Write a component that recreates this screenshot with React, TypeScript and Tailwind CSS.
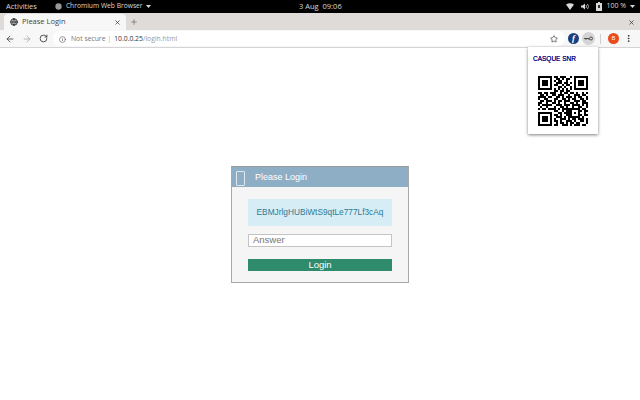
import React from 'react';
import { ArrowLeft, ArrowRight, RotateCw, Info, Star, X, Plus, Globe, MoreVertical } from 'lucide-react';

// 25x25 modules, 2px each
const QR_ROWS = [
  'XXXXXXX.XX.XXX..X.XXXXXXX',
  'X.....X..XX.X.XX..X.....X',
  'X.XXX.X.X.XX..X...X.XXX.X',
  'X.XXX.X..XXX.XX.X.X.XXX.X',
  'X.XXX.X.XX..X.XX..X.XXX.X',
  'X.....X...XX.X..X.X.....X',
  'XXXXXXX.X.X.X.X.X.XXXXXXX',
  '........XX.XX.XX.........',
  'XX.XX.XXX..X.XX.XX.X..X.X',
  '.XX.X..XX.XXX..X..XXX.XX.',
  'XXXX.XX..XX.X.XXX.X.XX..X',
  'X..XX...XX..XX.X.XX..XX.X',
  '.XX.XXX.X.XX.XXX..XXX.XX.',
  'XX..X..XX.X..X..XX.X..XXX',
  'X.XXXXX..XXX.XXX.XXXX.X.X',
  '.X..X...X..XX.X..X..XX..X',
  'X.XX.XXXX.X.XXXXXXXXX.XX.',
  '........XX..X.XXX...XX.XX',
  'XXXXXXX...XX.XXXX.X.X..X.',
  'X.....X.XX.X..XXX...XX.XX',
  'X.XXX.X..XXX.X.XXXXXX.X..',
  'X.XXX.X.X..XXX.X.XX.XXX.X',
  'X.XXX.X.XX.X..XXX.X..XX.X',
  'X.....X..X.XX.X.XX.XX...X',
  'XXXXXXX.XX..XXX.X.XXX.XX.',
];

const QrCode = () => (
  <svg width="50" height="50" viewBox="0 0 25 25" shapeRendering="crispEdges" className="block">
    {QR_ROWS.map((row, y) =>
      row.split('').map((c, x) => (c === 'X' ? <rect key={`${x}-${y}`} x={x} y={y} width="1" height="1" fill="#000" /> : null))
    )}
  </svg>
);

const TopBar = () => (
  <div className="relative flex h-[13px] items-center bg-black pl-[6px] pr-[4px] font-['Open_Sans',sans-serif] text-[7px] text-[#d8d8d8]">
    <span className="text-[7.5px]">Activities</span>
    <svg width="7" height="7" viewBox="0 0 10 10" className="ml-[18px]"><circle cx="5" cy="5" r="4.5" fill="#999" /></svg>
    <span className="ml-[4px] whitespace-nowrap text-[6.7px]">Chromium Web Browser</span>
    <svg width="5" height="3" viewBox="0 0 5 3" className="ml-[3px]"><path d="M0 0h5L2.5 3z" fill="#d8d8d8" /></svg>
    <span className="absolute left-[299px] top-0 text-[7.5px] leading-[13px]">3 Aug&nbsp; 09:06</span>
    <div className="ml-auto flex items-center">
      <svg width="8" height="7" viewBox="0 0 8 7"><path d="M0 1.5Q4-1 8 1.5L4 7z" fill="#d8d8d8" /></svg>
      <svg width="9" height="7" viewBox="0 0 9 7" className="ml-[7px]">
        <path d="M0 2.5h1.5L4 .5v6L1.5 4.5H0z" fill="#d8d8d8" />
        <path d="M5 2q1 1.5 0 3M6.5 1q2 2.500 0 5" stroke="#d8d8d8" fill="none" strokeWidth=".8" />
      </svg>
      <svg width="6" height="9" viewBox="0 0 6 9" className="ml-[6px]">
        <path d="M2 0h2v1h2v8H0V1h2z" fill="#d8d8d8" />
        <rect x="2" y="3" width="2" height="3" fill="#333" />
      </svg>
      <span className="ml-[4px]">100 %</span>
      <svg width="5" height="3" viewBox="0 0 5 3" className="ml-[4px] mr-[1px]"><path d="M0 0h5L2.500 3z" fill="#d8d8d8" /></svg>
    </div>
  </div>
);

const TabStrip = () => (
  <div className="flex h-[17px] items-end bg-[#dedbd8] font-['Open_Sans',sans-serif] text-[7.5px] text-[#444]">
    <div className="ml-[4px] flex h-[16px] w-[122px] items-center rounded-t-[4px] bg-[#f7f7f7] pl-[6px] pr-[5px]">
      <Globe size={8} strokeWidth={3} className="text-[#333]" />
      <span className="ml-[4px]">Please Login</span>
      <X size={7} strokeWidth={2.5} className="ml-auto text-[#333]" />
    </div>
    <Plus size={8} strokeWidth={2} className="mb-[4px] ml-[4px] text-[#666]" />
    <X size={7} strokeWidth={2.5} className="mb-[4px] ml-auto mr-[5px] text-[#333]" />
  </div>
);

const Toolbar = () => (
  <div className="flex h-[18px] items-center border-b border-[#d4d4d4] bg-[#f7f7f7] pl-[5px] font-['Open_Sans',sans-serif] text-[6.8px]">
    <ArrowLeft size={10} strokeWidth={2} className="text-[#444]" />
    <ArrowRight size={10} strokeWidth={2} className="ml-[7px] text-[#aaa]" />
    <RotateCw size={9} strokeWidth={2.4} className="ml-[7px] text-[#444]" />
    <div className="ml-[5px] flex h-[15px] w-[512px] items-center rounded-full bg-white pl-[6px] pt-[1px]">
      <Info size={7} strokeWidth={2} className="text-[#555]" />
      <span className="ml-[5px] text-[#777]">Not secure</span>
      <span className="ml-[2px] text-[#aaa]">|</span>
      <span className="ml-[3px] text-[#333]">10.0.0.25</span>
      <span className="text-[#999]">/login.html</span>
      <Star size={8} strokeWidth={2} className="ml-auto mr-[7px] text-[#333]" />
    </div>
    <div className="ml-[3px] flex h-[11px] w-[11px] items-center justify-center rounded-full bg-[#1c3f7c] font-['Liberation_Serif',serif] text-[9px] font-bold italic text-white">f</div>
    <div className="ml-[3px] flex h-[13px] w-[13px] items-center justify-center rounded-full bg-[#d4d4d4]">
      <svg width="9" height="5" viewBox="0 0 9 5">
        <path d="M0 2.500h5v1.500M2 2.500v1.500" stroke="#555" strokeWidth="1" fill="none" />
        <circle cx="7" cy="2.500" r="1.500" stroke="#555" fill="none" />
      </svg>
    </div>
    <div className="ml-[5px] h-[10px] w-px bg-[#d0d0d0]" />
    <div className="ml-[7px] flex h-[11px] w-[11px] items-center justify-center rounded-full bg-[#ea4a1c] text-[6px] text-white">B</div>
    <MoreVertical size={9} strokeWidth={2.6} className="ml-[5px] text-[#333]" />
  </div>
);

const LoginCard = () => (
  <div className="h-[117px] w-[178px] border border-[#a8a8a8] border-t-[#9a9a9a] bg-[#f5f5f5] font-['Liberation_Sans',sans-serif]">
    <div className="flex h-[20px] items-center bg-[#8eaec6] pl-[4px] pt-[1px] text-[9px] text-white">
      <div className="h-[15px] w-[9px] translate-y-[1px] rounded-[1px] border border-[#dfe8ef]" />
      <span className="ml-[10px]">Please Login</span>
    </div>
    <div className="px-[16px] pt-[12px]">
      <div className="flex h-[27px] items-center justify-center bg-[#d7edf6] text-[8.3px] text-[#2c7a94]">EBMJrlgHUBiWtS9qtLe777Lf3cAq</div>
      <div className="mt-[8px] flex h-[13px] items-center border border-[#c4c4c4] bg-white pl-[4px] text-[9.500px] text-[#777]">Answer</div>
      <div className="mt-[12px] flex h-[12px] items-center justify-center bg-[#2e8b6b] text-[9.500px] text-white">Login</div>
    </div>
  </div>
);

export default function App() {
  return (
    <div className="relative flex h-[400px] w-[640px] flex-col overflow-hidden bg-white">
      <TopBar />
      <TabStrip />
      <Toolbar />
      <main className="flex flex-1 justify-center pt-[118px]">
        <LoginCard />
      </main>
      {/* extension popup */}
      <div className="absolute left-[528px] top-[47px] h-[87px] w-[70px] bg-white pl-[5px] pt-[7px] font-['Liberation_Sans',sans-serif] shadow-[0_1px_3px_rgba(0,0,0,0.5)]">
        <div className="text-[6.500px] font-medium leading-[9px] text-[#0c0c80] [text-shadow:0_0_0.4px_#0c0c80]">CASQUE SNR</div>
        <div className="ml-[5px] mt-[13px]">
          <QrCode />
        </div>
      </div>
    </div>
  );
}
